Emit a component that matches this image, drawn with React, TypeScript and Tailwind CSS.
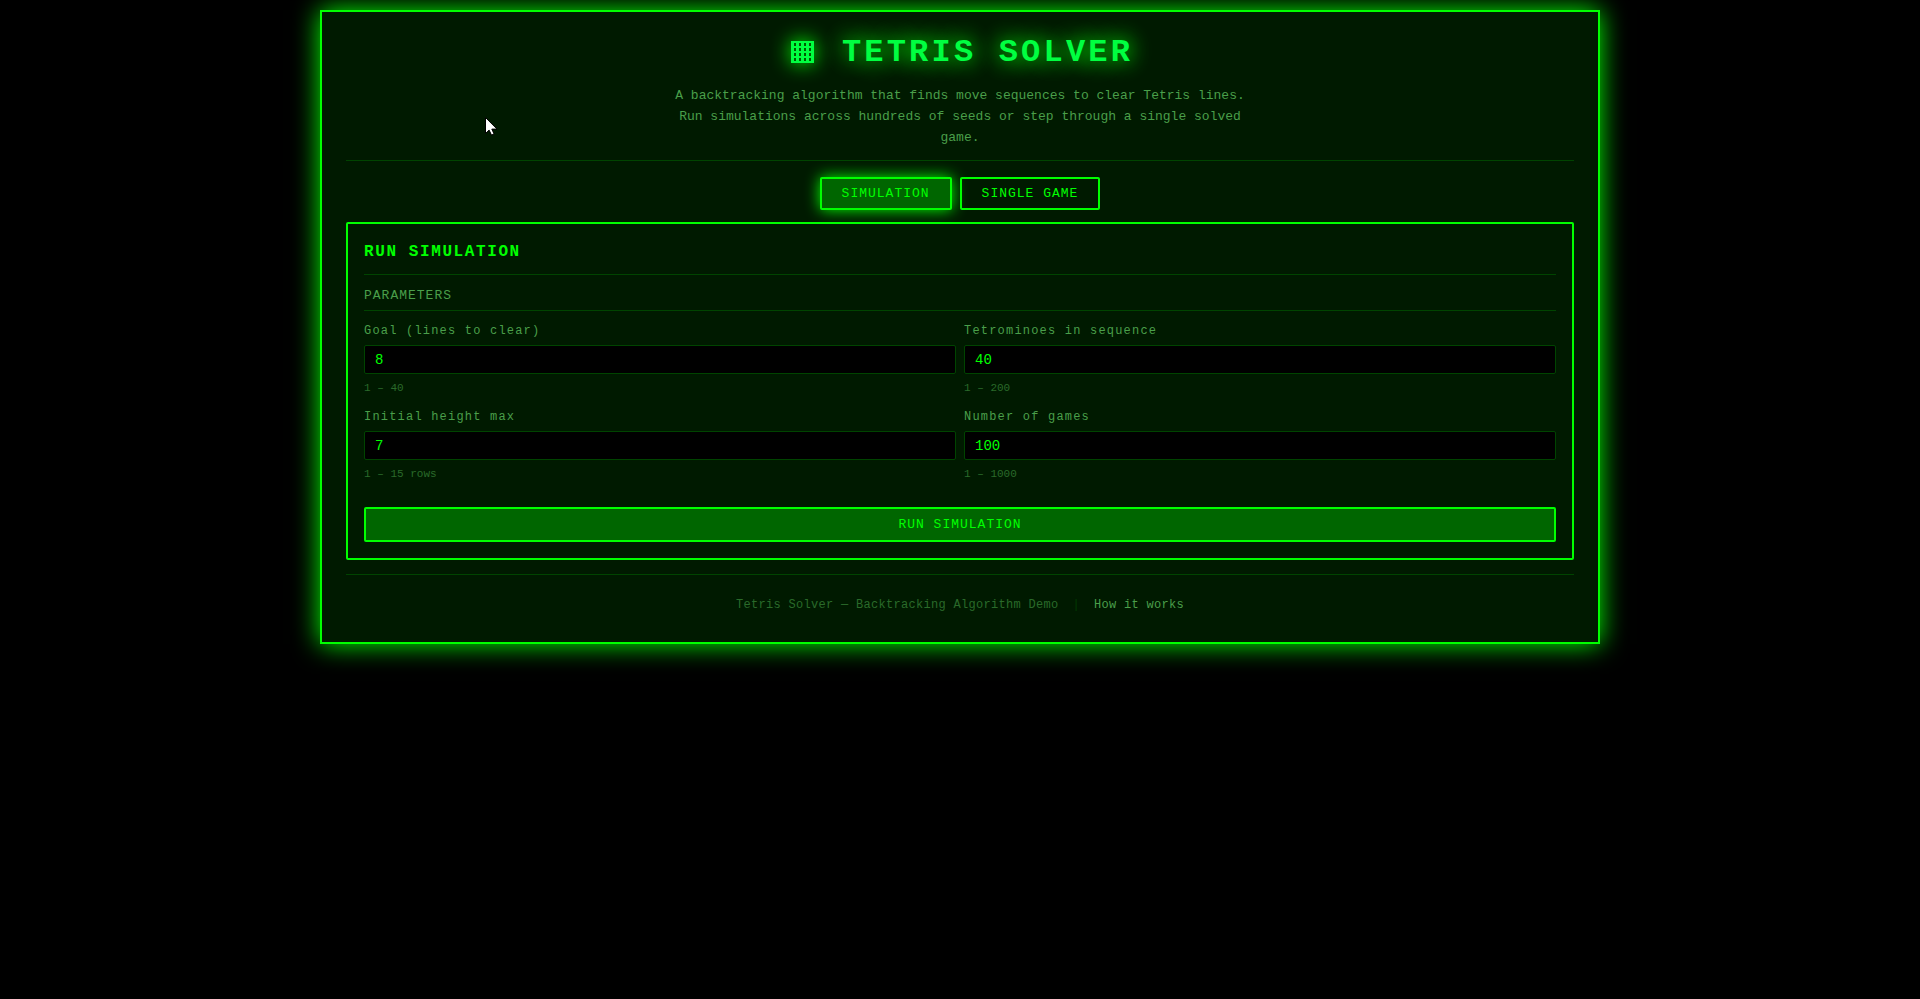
import { useState } from 'react';

type FieldProps = {
  id: string;
  label: string;
  hint: string;
  value: string;
  onChange: (value: string) => void;
};

function Field({ id, label, hint, value, onChange }: FieldProps) {
  return (
    <div>
      <label
        htmlFor={id}
        className="mb-1 block text-xs leading-5 tracking-widest text-[#4a9f4a]"
      >
        {label}
      </label>
      <input
        id={id}
        type="number"
        value={value}
        onChange={(e) => onChange(e.target.value)}
        className="block h-[29px] w-full appearance-none rounded-xs border border-[#004400] bg-black px-2.5 text-sm text-[#00ff00] outline-none [&::-webkit-inner-spin-button]:appearance-none"
      />
      <p className="mt-1.5 text-[11px] leading-4 text-[#2a6a2a]">{hint}</p>
    </div>
  );
}

const CELLS = [3, 8, 13, 18];

function GridIcon() {
  return (
    <svg
      width="24"
      height="24"
      viewBox="0 0 24 24"
      className="overflow-visible drop-shadow-[0_0_10px_#00ff00]"
      aria-hidden="true"
    >
      <rect width="23" height="22" fill="#00ff41" />
      {CELLS.map((y) =>
        CELLS.map((x) => (
          <rect key={`${x}-${y}`} x={x} y={y - 1} width="2" height="3" fill="#005a00" />
        )),
      )}
    </svg>
  );
}

const FIELDS = [
  { id: 'goal', label: 'Goal (lines to clear)', hint: '1 – 40' },
  { id: 'tetrominoes', label: 'Tetrominoes in sequence', hint: '1 – 200' },
  { id: 'height', label: 'Initial height max', hint: '1 – 15 rows' },
  { id: 'games', label: 'Number of games', hint: '1 – 1000' },
];

const TABS = ['SIMULATION', 'SINGLE GAME'];

export default function App() {
  const [tab, setTab] = useState(TABS[0]);
  const [values, setValues] = useState<Record<string, string>>({
    goal: '8',
    tetrominoes: '40',
    height: '7',
    games: '100',
  });

  return (
    <div className="min-h-screen bg-black p-2.5 font-['Courier_New','Liberation_Mono',monospace] text-[#00ff00]">
      <main className="mx-auto max-w-[1280px] border-2 border-[#00ff00] bg-[#001a00] px-6 pt-5 pb-6 shadow-[0_0_25px_#00ff00]">
        <header className="border-b border-[#004400] pb-3 text-center">
          <h1 className="flex items-center justify-center gap-[27px] pl-1 text-[32px] leading-[41px] font-bold tracking-widest text-[#00ff41] [text-shadow:0_0_20px_#00ff00,0_0_30px_#00ff0066]">
            <GridIcon />
            TETRIS SOLVER
          </h1>
          <p className="mx-auto mt-3 max-w-[600px] text-[13px] leading-[21px] text-[#4a9f4a]">
            A backtracking algorithm that finds move sequences to clear Tetris lines. Run
            simulations across hundreds of seeds or step through a single solved game.
          </p>
        </header>

        <nav className="mt-4 mb-3 flex justify-center gap-2">
          {TABS.map((name) => (
            <button
              key={name}
              type="button"
              onClick={() => setTab(name)}
              className={`h-[33px] rounded-xs border-2 border-[#00ff00] px-5 text-[13px] tracking-[1px] ${
                tab === name ? 'bg-[#006600] shadow-[0_0_15px_#00ff00]' : ''
              }`}
            >
              {name}
            </button>
          ))}
        </nav>

        <section className="rounded-xs border-2 border-[#00ff00] p-4">
          <h2 className="border-b border-[#004400] pb-2.5 text-base leading-6 font-bold tracking-widest">
            RUN SIMULATION
          </h2>
          <form onSubmit={(e) => e.preventDefault()}>
            <h3 className="border-b border-[#004400] pt-[11px] pb-1 text-[13px] leading-5 tracking-[1px] text-[#4a9f4a]">
              PARAMETERS
            </h3>
            <div className="grid grid-cols-2 gap-x-2 gap-y-[11px] pt-2.5">
              {FIELDS.map((f) => (
                <Field
                  key={f.id}
                  {...f}
                  value={values[f.id]}
                  onChange={(v) => setValues({ ...values, [f.id]: v })}
                />
              ))}
            </div>
            <button
              type="submit"
              className="mt-[25px] h-[35px] w-full rounded-xs border-2 border-[#00ff00] bg-[#006600] text-[13px] tracking-[1px]"
            >
              RUN SIMULATION
            </button>
          </form>
        </section>

        <footer className="mt-3.5 border-t border-[#004400] pt-[21px] pb-1 text-center text-xs leading-[18px] tracking-wide text-[#2a6a2a]">
          Tetris Solver — Backtracking Algorithm Demo
          <span className="mx-3.5 text-[#003b00]">|</span>
          <a href="#how" className="text-[#4a9f4a]">
            How it works
          </a>
        </footer>
      </main>

      {/* pointer */}
      <svg
        className="pointer-events-none absolute top-[117px] left-[485px]"
        width="13"
        height="19"
        viewBox="0 0 13 19"
        aria-hidden="true"
      >
        <path
          d="M.5.5v16l3.6-3.4 2.4 5 2.6-1.1-2.3-4.9h5.2z"
          fill="#fff"
          stroke="#000"
          strokeWidth="1"
        />
      </svg>
    </div>
  );
}
